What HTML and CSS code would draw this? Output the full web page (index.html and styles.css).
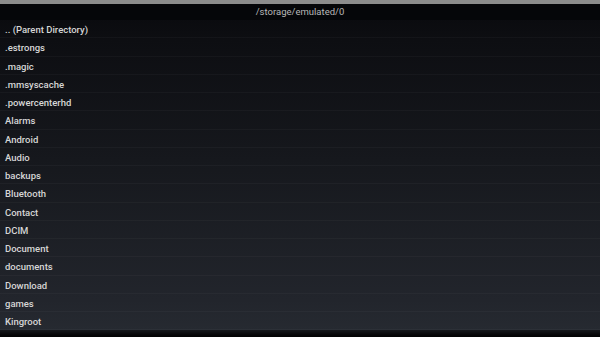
FILE: index.html
```html
<!DOCTYPE html>
<html>
<head>
<meta charset="utf-8">
<link rel="stylesheet" href="styles.css">
</head>
<body>
<div class="screen">
  <div class="statusbar"></div>
  <div class="header">/storage/emulated/0</div>
  <ul class="list">
    <li class="row">.. (Parent Directory)</li>
    <li class="row">.estrongs</li>
    <li class="row">.magic</li>
    <li class="row">.mmsyscache</li>
    <li class="row">.powercenterhd</li>
    <li class="row">Alarms</li>
    <li class="row">Android</li>
    <li class="row">Audio</li>
    <li class="row">backups</li>
    <li class="row">Bluetooth</li>
    <li class="row">Contact</li>
    <li class="row">DCIM</li>
    <li class="row">Document</li>
    <li class="row">documents</li>
    <li class="row">Download</li>
    <li class="row">games</li>
    <li class="row">Kingroot</li>
  </ul>
  <div class="footer"></div>
</div>
</body>
</html>
```
FILE: styles.css
```css
html, body {
  margin: 0;
  padding: 0;
  background: #000;
}
.screen {
  width: 600px;
  height: 337px;
  overflow: hidden;
  display: flex;
  flex-direction: column;
  font-family: Roboto, "Liberation Sans", sans-serif;
  background: linear-gradient(to bottom, #08090c 0px, #0d0e12 40px, #16181d 160px, #22252c 300px, #262a31 330px);
}
.statusbar {
  height: 4px;
  background: #8c8c8c;
  flex: none;
}
.header {
  height: 16px;
  flex: none;
  background: #050609;
  color: #b8b8b8;
  font-size: 9.5px;
  line-height: 15px;
  text-align: center;
}
.list {
  list-style: none;
  margin: 0;
  padding: 0;
  flex: none;
}
.row {
  height: 18.25px;
  box-sizing: border-box;
  padding-top: 1px;
  line-height: 17px;
  padding-left: 5px;
  font-size: 9.5px;
  font-weight: 500;
  color: #d6d6d6;
  border-bottom: 1px solid rgba(255, 255, 255, 0.03);
}
.footer {
  flex: 1;
  background: linear-gradient(to bottom, #15171b 0px, #050507 5px, #020203 100%);
}
```
